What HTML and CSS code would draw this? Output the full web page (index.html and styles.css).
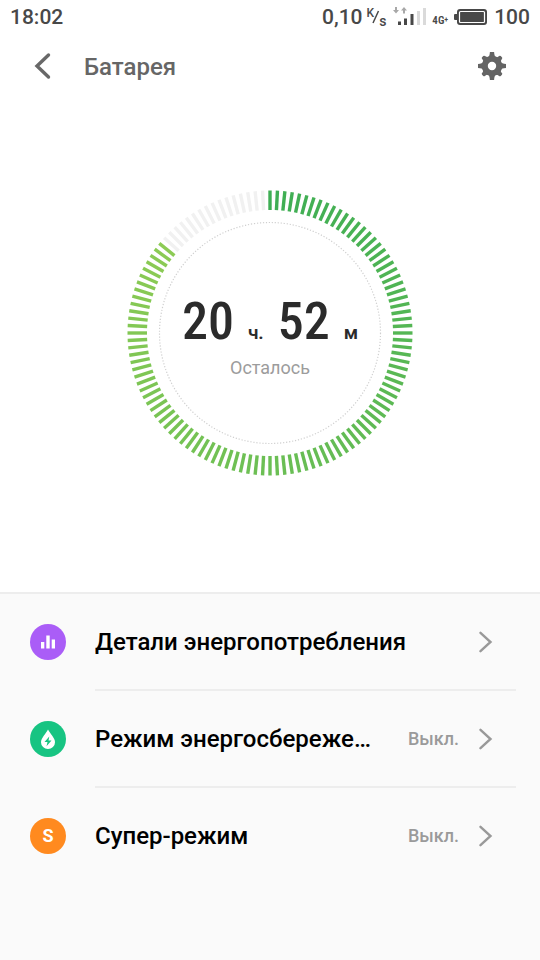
FILE: index.html
```html
<!DOCTYPE html>
<html lang="ru">
<head>
<meta charset="utf-8">
<meta name="viewport" content="width=device-width, initial-scale=1">
<title>Батарея</title>
<link rel="stylesheet" href="styles.css">
</head>
<body>
<div class="status">
  <time class="clock">18:02</time>
  <div class="indicators">
    <span>0,10</span>
    <span class="rate"><span class="rate-top">K</span><svg width="8" height="18" viewBox="0 0 8 18" aria-hidden="true"><path d="M1 15 6.500 3" stroke="#484848" stroke-width="1.500"/></svg><span class="rate-bottom">s</span></span>
    <svg class="signal" width="34" height="20" viewBox="0 0 34 20" aria-hidden="true">
      <path d="M2 0h2v3h2L3 6.500 0 3h2zM10 6.500h2v-3h2L11 0 8 3.500h2z" fill="#a8a8a8"/>
      <path d="M5 14.500h3V18H5zM11 11.500h3V18h-3zM17.500 7h3v11h-3z" fill="#484848"/>
      <path d="M24 4h3v14h-3zM30 1h3v17h-3z" fill="#dadada"/>
    </svg>
    <span class="network">4G<sup>+</sup></span>
    <svg class="battery" width="34" height="18" viewBox="0 0 34 18" aria-hidden="true">
      <rect x="3" y="1" width="30" height="16" rx="3" fill="#484848"/>
      <path d="M0 7q0-1 1-1h2v6H1q-1 0-1-1z" fill="#484848"/>
      <rect x="5.500" y="3.500" width="25" height="11" rx="1" fill="none" stroke="#fff" stroke-width="1.200"/>
    </svg>
    <span>100</span>
  </div>
</div>

<header class="bar">
  <button class="icon-button" type="button" aria-label="Назад">
    <svg width="18" height="28" viewBox="0 0 18 28" aria-hidden="true"><path d="M14.500 3 3 14l11.500 11" fill="none" stroke="#686868" stroke-width="3.400" stroke-linecap="round" stroke-linejoin="miter"/></svg>
  </button>
  <h1>Батарея</h1>
  <button class="icon-button" type="button" aria-label="Настройки">
    <svg id="gear" width="28" height="28" viewBox="-14 -14 28 28" aria-hidden="true">
      <circle r="7.200" fill="none" stroke="#646464" stroke-width="6"/>
      <g fill="#646464">
        <path id="tooth" d="M-4.200-8.500C-2.800-9.500-2.300-11-2.100-14H2.100C2.300-11 2.800-9.500 4.200-8.500z"/>
        <use href="#tooth" transform="rotate(90)"/><use href="#tooth" transform="rotate(180)"/><use href="#tooth" transform="rotate(270)"/>
        <path id="knob" d="M-3.800-8.500C-2.500-9.500-2-10.500-2-12q0-1.200 1.200-1.200H.8Q2-13.200 2-12 2-10.500 3.800-8.500z" transform="rotate(45)"/>
        <use href="#knob" transform="rotate(90)"/><use href="#knob" transform="rotate(180)"/><use href="#knob" transform="rotate(270)"/>
      </g>
    </svg>
  </button>
</header>

<main class="charge">
  <div class="dial">
    <svg class="ring" viewBox="-143 -143 286 286" aria-hidden="true">
      <g id="ticks"></g>
      <circle r="110.500" fill="none" stroke="#cfcfcf" stroke-width="1.200" stroke-dasharray="1.200 1.800"/>
    </svg>
    <div class="reading">
      <p class="time"><b>20</b><small>ч.</small><b>52</b><small>м</small></p>
      <p class="caption">Осталось</p>
    </div>
  </div>
</main>

<nav class="menu">
  <a class="row" href="#details">
    <svg class="badge" viewBox="0 0 36 36" aria-hidden="true"><circle cx="18" cy="18" r="18" fill="#aa5df7"/><path d="M11 18h3.300v6.500H11zM16.300 11.500h3.400v13h-3.400zM21.700 15.500H25v9h-3.300z" fill="#fff"/></svg>
    <span class="line"><span class="label">Детали энергопотребления</span>
    <svg class="arrow" viewBox="0 0 14 22" aria-hidden="true"><path d="M1.500 1.800 11.500 11l-10 9.200"/></svg></span>
  </a>
  <a class="row" href="#saving">
    <svg class="badge" viewBox="0 0 36 36" aria-hidden="true"><circle cx="18" cy="18" r="18" fill="#17c482"/><path d="M18 8.500C20 12.500 25 17 25 21.200a7 6.800 0 0 1-14 0C11 17 16 12.500 18 8.500z" fill="#fff"/><path d="M19.300 15.500 14.500 21h3l-1 4.200 5-5.700h-3z" fill="#17c482"/></svg>
    <span class="line"><span class="label">Режим энергосбережения</span><span class="state">Выкл.</span>
    <svg class="arrow" viewBox="0 0 14 22" aria-hidden="true"><path d="M1.500 1.800 11.500 11l-10 9.200"/></svg></span>
  </a>
  <a class="row" href="#super">
    <span class="badge letter">S</span>
    <span class="line"><span class="label">Супер-режим</span><span class="state">Выкл.</span>
    <svg class="arrow" viewBox="0 0 14 22" aria-hidden="true"><path d="M1.500 1.800 11.500 11l-10 9.200"/></svg></span>
  </a>
</nav>
<script src="dial.js"></script>
</body>
</html>
```
FILE: styles.css
```css
* { box-sizing: border-box; }

body {
  margin: 0;
  min-height: 100vh;
  display: flex;
  flex-direction: column;
  background: #fff;
  color: #484848;
  font-family: Roboto, "Noto Sans", sans-serif;
}

.status {
  display: flex;
  justify-content: space-between;
  align-items: center;
  height: 34px;
  padding: 0 10px;
  font-size: 21px;
  font-weight: 500;
}

.indicators { display: flex; align-items: center; }

.rate {
  display: flex;
  margin: 0 7px 0 4px;
  height: 18px;
  font-size: 12px;
  line-height: 10px;
}
.rate svg { margin: 0 -1px 0 -2px; }
.rate-bottom { align-self: flex-end; font-size: 14px; }

.network {
  margin: 8px 6px 0 5px;
  font-family: "Roboto Condensed", Roboto, sans-serif;
  font-size: 11px;
  line-height: 10px;
  font-weight: 600;
}
.network sup { font-size: 8px; line-height: 0; vertical-align: 2px; }

.battery { margin-right: 6px; }

.bar {
  display: flex;
  align-items: center;
  height: 64px;
  padding: 0 34px;
}

.bar h1 {
  flex: 1;
  margin: 0 0 0 32px;
  padding-top: 2px;
  color: #666;
  font-size: 24px;
  line-height: 28px;
  font-weight: 500;
}

.icon-button {
  display: flex;
  padding: 0;
  border: 0;
  background: none;
}

.charge {
  display: grid;
  place-items: center;
  padding: 92px 20px 116px;
}

.dial {
  display: grid;
  place-items: center;
  width: 100%;
  max-width: 286px;
}
.ring, .reading { grid-area: 1 / 1; }
.ring { width: 100%; display: block; }

.reading { padding-top: 14px; text-align: center; }
.reading p { margin: 0; }

.time {
  display: flex;
  align-items: baseline;
  justify-content: center;
  color: #2b2b2b;
  font-family: "Roboto Condensed", Roboto, sans-serif;
  line-height: 56px;
}
.time b { font-size: 52px; font-weight: 500; }
.time small {
  margin: 0 14px;
  font-family: Roboto, sans-serif;
  font-size: 19px;
  line-height: 20px;
  font-weight: 600;
}
.time small:last-child { margin-right: 0; }

.reading .caption {
  color: #9c9c9c;
  font-size: 18px;
  line-height: 36px;
}

.menu {
  flex: 1;
  border-top: 2px solid #ededed;
  background: #fafafa;
}

.row {
  display: flex;
  align-items: center;
  gap: 29px;
  padding: 0 24px 0 30px;
  color: #000;
  text-decoration: none;
}

.badge { flex: none; width: 36px; height: 36px; margin-bottom: 2px; }

.letter {
  display: grid;
  place-items: center;
  border-radius: 50%;
  background: #ff8a1f;
  color: #fff;
  font-size: 18px;
  font-weight: 700;
}

.line {
  flex: 1;
  min-width: 0;
  display: flex;
  align-items: center;
  height: 97px;
  padding-right: 23px;
  border-bottom: 2px solid #ededed;
}
.row:last-child .line { border-bottom-color: transparent; }

.label {
  flex: 1;
  overflow: hidden;
  white-space: nowrap;
  text-overflow: ellipsis;
  font-size: 24px;
  line-height: 32px;
  font-weight: 500;
}

.state {
  margin-left: 28px;
  color: #9a9a9a;
  font-size: 18px;
  font-weight: 500;
}

.arrow {
  flex: none;
  width: 14px;
  height: 22px;
  margin-left: 20px;
  fill: none;
  stroke: #999;
  stroke-width: 2.400;
  stroke-linecap: round;
}
```
FILE: dial.js
```js
const TICKS = 120;
const FILLED = 104;
const START = [62, 174, 84];
const END = [140, 203, 84];
const group = document.getElementById('ticks');

for (let i = 0; i < TICKS; i++) {
  const tick = document.createElementNS('http://www.w3.org/2000/svg', 'path');
  const t = i / (FILLED - 1);
  const color = START.map((c, k) => Math.round(c + (END[k] - c) * t));
  tick.setAttribute('d', 'M0-123V-142.500');
  tick.setAttribute('transform', `rotate(${i * 360 / TICKS})`);
  tick.setAttribute('stroke-width', '3.4');
  tick.setAttribute('stroke', i < FILLED ? `rgb(${color})` : '#f1f1f1');
  group.append(tick);
}
```
